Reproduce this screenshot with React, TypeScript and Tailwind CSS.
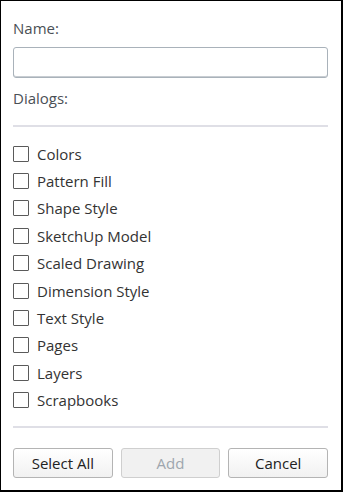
import React from "react";

const items = [
  "Colors",
  "Pattern Fill",
  "Shape Style",
  "SketchUp Model",
  "Scaled Drawing",
  "Dimension Style",
  "Text Style",
  "Pages",
  "Layers",
  "Scrapbooks",
];

export default function App() {
  return (
    <div
      className="w-[343px] h-[492px] bg-white border-t border-l border-r-2 border-b-2 border-black flex flex-col px-3"
      style={{ fontFamily: '"Open Sans", sans-serif' }}
    >
      <div className="text-[15px] text-[#4a4f55] mt-[17px] leading-[20px]">Name:</div>
      <input
        className="mt-[9px] h-[31px] w-[315px] rounded-[3px] border border-[#a9b2ba] shadow-[inset_0_-1px_0_#c8cdd2] outline-none"
        type="text"
      />
      <div className="text-[15px] text-[#4a4f55] mt-[10px] leading-[20px]">Dialogs:</div>
      <div className="mt-[17px] h-[2px] w-[315px] bg-[#dfdfe6]" />
      <div className="flex flex-col mt-[13px]">
        {items.map((t) => (
          <div key={t} className="flex items-center h-[27.4px] gap-[8px]">
            <div className="w-[16px] h-[16px] border border-[#5a5a5a] rounded-[1px] bg-white shrink-0" />
            <span className="text-[15px] text-[#333] leading-[20px]">{t}</span>
          </div>
        ))}
      </div>
      <div className="mt-[12px] h-[2px] w-[315px] bg-[#dfdfe6]" />
      <div className="flex gap-[8px] mt-[20px] w-[315px]">
        <button className="w-[100px] h-[30px] rounded-[3px] border border-[#b4b4b4] bg-gradient-to-b from-white to-[#f1f1f1] text-[15px] text-[#222]">
          Select All
        </button>
        <button className="w-[100px] h-[30px] rounded-[3px] border border-[#cfcfcf] bg-[#f1f1f1] text-[15px] text-[#9ea6ae]">
          Add
        </button>
        <button className="w-[100px] h-[30px] rounded-[3px] border border-[#b4b4b4] bg-gradient-to-b from-white to-[#f1f1f1] text-[15px] text-[#222]">
          Cancel
        </button>
      </div>
    </div>
  );
}
